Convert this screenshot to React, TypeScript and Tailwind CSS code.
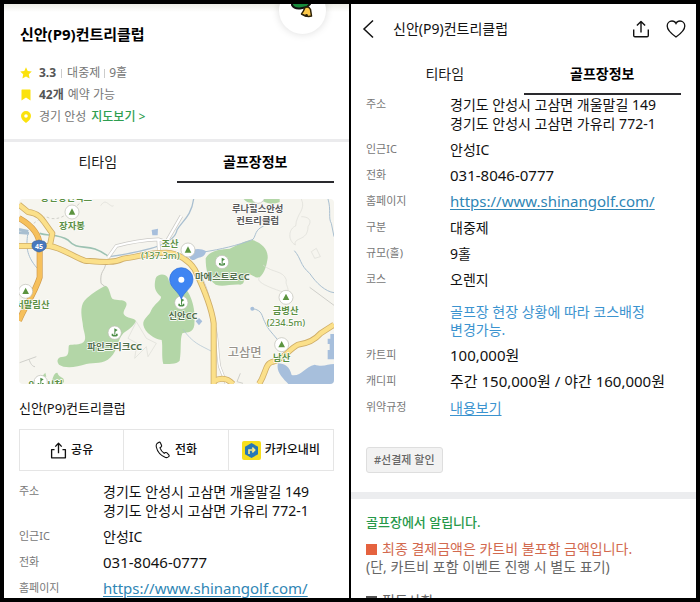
import type { ReactNode } from "react";

const HOMEPAGE = "https://www.shinangolf.com/";

function Tabs() {
  return (
    <div role="tablist" className="mx-[15px] grid grid-cols-2 text-[14px] text-[#1c1c1c]">
      <button role="tab" aria-selected="false" className="h-[41px] border-b-2 border-transparent">
        티타임
      </button>
      <button role="tab" aria-selected="true" className="h-[41px] border-b-2 border-[#2a2a2e] font-bold text-black">
        골프장정보
      </button>
    </div>
  );
}

function Row({ label, children }: { label: string; children: ReactNode }) {
  return (
    <div className="flex">
      <dt className="w-[84px] shrink-0 text-[11px] leading-[17px] text-[#777]">{label}</dt>
      <dd className="min-w-0 flex-1 whitespace-nowrap text-[14px] leading-[19px] text-[#111]">{children}</dd>
    </div>
  );
}

function BasicRows() {
  return (
    <>
      <Row label="주소">
        경기도 안성시 고삼면 개울말길 149
        <br />
        경기도 안성시 고삼면 가유리 772-1
      </Row>
      <Row label="인근IC">안성IC</Row>
      <Row label="전화">
        <span className="text-[15px]">031-8046-0777</span>
      </Row>
      <Row label="홈페이지">
        <a href={HOMEPAGE} className="text-[15px] text-[#2f86b5] underline underline-offset-2">
          {HOMEPAGE}
        </a>
      </Row>
    </>
  );
}

function Peak({ x, y }: { x: number; y: number }) {
  return (
    <g>
      <circle cx={x} cy={y} r="21" fill="#fff" stroke="#bdbdb4" strokeWidth="2" />
      <path d={`M${x} ${y - 11}l10 19h-20z`} fill="#5c9440" />
    </g>
  );
}

function Course({ x, y }: { x: number; y: number }) {
  return (
    <g>
      <circle cx={x} cy={y} r="20" fill="#fff" stroke="#bdbdb4" strokeWidth="2" />
      <path d={`M${x - 1} ${y - 13}l10 5l-7 5v9h-3z`} fill="#4f8f4a" />
      <path d={`M${x - 9} ${y + 3}h5v4h8v-4h5v6q-9 5 -18 0z`} fill="#4f8f4a" />
    </g>
  );
}

function CourseMap() {
  return (
    <svg
      viewBox="58 27 945 555"
      preserveAspectRatio="xMidYMid slice"
      className="mx-[15px] mt-4 h-[185px] rounded-sm"
      role="img"
      aria-label="신안CC 지도"
    >
      <rect x="58" y="27" width="945" height="555" fill="#f6f5ef" />
      <g fill="#b3d6a7">
        <path d="M316 287C330 288 331 318 338 326C352 333 372 326 380 338C384 350 370 358 372 372C382 388 402 382 409 393C402 410 384 420 371 430C352 452 355 480 333 502C310 525 285 517 260 522C230 532 195 536 178 524C168 510 176 500 192 500C212 500 204 475 208 466C220 462 240 466 251 457C264 445 250 425 249 400C244 370 240 342 262 324C280 308 300 296 316 287Z" />
        <path d="M468 265C475 250 500 250 506 266C510 285 520 290 545 286C570 300 590 350 584 405C580 430 565 425 548 430C540 450 546 480 540 512C530 525 505 520 491 522C485 500 490 470 486 450C465 448 435 428 431 405C428 385 450 378 455 360C465 340 486 330 484 320C465 305 462 290 468 265Z" />
        <path d="M618 205C630 180 665 178 690 176C715 165 735 152 758 150C785 158 806 178 804 205C801 225 795 250 780 262C762 265 758 250 745 256C725 270 740 280 722 284C690 282 670 292 648 284C625 270 618 240 618 205Z" />
        <path d="M732 27H840V36C818 45 800 40 790 34C770 36 745 46 732 27Z" />
        <path d="M126 560L137 548L140 560ZM152 582C160 570 160 548 173 548C180 566 194 558 193 575L188 582Z" />
      </g>
      <g fill="#a7bfdc">
        <path d="M835 520C855 520 870 530 876 555C905 560 915 530 945 524C970 532 985 522 1003 522V582H866C850 565 828 545 835 520Z" />
        <path d="M992 432H1003V508H984V480H990V462H984V446H992Z" />
        <path d="M568 192C580 174 600 174 620 184C612 206 600 200 590 206C578 216 566 206 568 192Z" />
        <path d="M456 120L475 116L474 136L458 136ZM588 394L598 384L608 394L598 406Z" />
        <circle cx="758" cy="356" r="6" />
      </g>
      <g fill="none" stroke="#a9bfd0" strokeWidth="4">
        <path d="M58 118L86 124M58 128L88 130" strokeWidth="8" />
        <path d="M84 134C80 165 78 195 112 234" strokeWidth="3" />
        <path d="M582 27C575 80 545 95 532 120C525 160 460 180 330 200" />
        <path d="M618 185C660 178 710 168 760 148C770 135 765 120 792 108" strokeWidth="3" />
        <path d="M758 356C790 360 786 380 795 395C805 420 820 430 842 460" strokeWidth="3" />
        <path d="M884 182C905 205 900 225 930 250C950 280 978 305 1003 308" strokeWidth="3" />
        <path d="M550 418C580 460 600 465 640 486" strokeWidth="2" />
        <path d="M985 27C995 60 985 85 995 100L1003 140" strokeWidth="3" />
      </g>
      <path d="M120 130C145 140 175 130 205 150C240 190 265 150 330 202" fill="none" stroke="#9cc2b2" strokeWidth="5" />
      <g fill="none" stroke="#dddcd6" strokeWidth="2">
        <path d="M90 110C120 85 135 75 150 85C185 90 200 75 240 40" strokeDasharray="8 7" stroke="#bdbcb5" />
        <path d="M303 47C320 20 330 55 342 47M905 27C920 60 890 70 888 108C868 115 862 150 887 165C880 140 925 155 925 110C940 90 925 80 905 80M935 185L950 175L962 200L945 205Z" />
        <path d="M790 225C820 250 850 240 860 270C855 290 880 300 850 315M780 262C760 280 850 305 860 310M410 395L440 445L470 460L445 500L440 470L405 505L412 460L385 445Z" />
        <path d="M60 518L110 500M88 508C92 520 98 530 106 530M722 550L712 575L730 580M930 292L1003 346" stroke="#cfcfca" strokeWidth="3" />
        <path d="M318 220C316 245 300 240 304 280L316 290" stroke="#c9c8c2" strokeWidth="3" />
      </g>
      <g fill="none" strokeLinejoin="round">
        <path d="M325 203L350 168C385 158 430 150 476 148L500 156L545 78M476 148L478 185" stroke="#cbcac6" strokeWidth="11" />
        <path d="M325 203L350 168C385 158 430 150 476 148L500 156L545 78M476 148L478 185" stroke="#fff" strokeWidth="7" />
        <path d="M590 240C625 290 632 350 640 400C655 420 652 490 660 530L680 582" stroke="#cbcac6" strokeWidth="9" />
        <path d="M590 240C625 290 632 350 640 400C655 420 652 490 660 530L680 582" stroke="#fff" strokeWidth="5" />
        <path d="M58 84C95 105 120 130 120 168V262C105 310 75 350 58 392" stroke="#cf9a4c" strokeWidth="18" />
        <path d="M58 84C95 105 120 130 120 168V262C105 310 75 350 58 392" stroke="#f6c05c" strokeWidth="14" />
        <g stroke="#cfae69" strokeWidth="18">
          <path d="M58 44L85 66C125 70 130 95 158 130L150 170M58 168H150C190 175 220 200 255 212C310 216 340 220 370 206C420 200 440 188 500 188C540 190 570 215 585 238C610 290 635 345 642 400V582" />
          <path d="M640 575C665 560 685 566 700 582M778 582C800 550 795 520 820 515C850 510 865 480 895 464C930 460 950 445 963 430L1003 404" />
        </g>
        <g stroke="#fbe08a" strokeWidth="13">
          <path d="M58 44L85 66C125 70 130 95 158 130L150 170M58 168H150C190 175 220 200 255 212C310 216 340 220 370 206C420 200 440 188 500 188C540 190 570 215 585 238C610 290 635 345 642 400V582" />
          <path d="M640 575C665 560 685 566 700 582M778 582C800 550 795 520 820 515C850 510 865 480 895 464C930 460 950 445 963 430L1003 404" />
        </g>
      </g>
      <path d="M97 168C97 150 108 155 118 150C128 155 140 150 140 168C140 178 128 184 118 186C108 184 97 178 97 168Z" fill="#4778bd" stroke="#3c65a2" strokeWidth="2" />
      <text x="118" y="176" textAnchor="middle" fontSize="21" fontWeight="700" fill="#fff">45</text>
      <Peak x={217} y={66} />
      <Peak x={78} y={304} />
      <Peak x={565} y={180} />
      <Peak x={859} y={322} />
      <Peak x={846} y={464} />
      <Course x={345} y={428} />
      <Course x={667} y={216} />
      <Course x={545} y={338} />
      <circle cx="775" cy="20" r="20" fill="#fff" stroke="#bdbdb4" strokeWidth="2" />
      <g textAnchor="middle" fontSize="28" fontWeight="700" stroke="#fff" strokeWidth="4" strokeLinejoin="round" paintOrder="stroke" fill="#5c9044">
        <text x="200" y="34">공안성컨벽스</text>
        <text x="217" y="117">장자봉</text>
        <text x="98" y="354">서말림산</text>
        <text x="511" y="170">조산</text>
        <text x="482" y="206" fontWeight="500">(137.3m)</text>
        <text x="858" y="371">금병산</text>
        <text x="859" y="408" fontWeight="500">(234.5m)</text>
        <text x="846" y="514">남산</text>
        <text x="138" y="594">안성시청</text>
        <g fill="#52704c">
          <text x="345" y="479">파인크리크CC</text>
          <text x="668" y="269">마에스트로CC</text>
          <text x="550" y="387">신안CC</text>
        </g>
        <g fill="#5a5a5a">
          <text x="774" y="67">루나힐스안성</text>
          <text x="774" y="103">컨트리클럽</text>
        </g>
        <text x="735" y="500" fontSize="37" fontWeight="500" fill="#98948c">고삼면</text>
      </g>
      <Course x={123} y={576} />
      <path d="M545 328C538 304 510 294 510 268A35 35 0 0 1 580 268C580 294 552 304 545 328Z" fill="#3f85f2" stroke="#2f6fd8" strokeWidth="2" />
      <circle cx="545" cy="269" r="9" fill="#fff" />
    </svg>
  );
}

function Mascot() {
  return (
    <div className="absolute -top-[17px] right-[23px] size-[47px] rounded-full bg-white shadow-[0_0_8px_rgba(0,0,0,0.14)]">
      <svg viewBox="0 0 47 47" className="size-full" aria-hidden="true">
        <path d="M13 12V18Q15 22 21 21.500L28 20L31 17V12Z" fill="#178a3b" stroke="#111" strokeWidth="2" />
        <path d="M26 20.500Q30 19 31.500 22.500L32.500 29Q28 30.500 22.500 27Q24.500 24.500 26 20.500Z" fill="#fcc84a" stroke="#2c2108" strokeWidth="1.500" strokeLinejoin="round" />
        <circle cx="27.500" cy="28.500" r="1.400" fill="#2c2108" />
      </svg>
    </div>
  );
}

function SummaryPanel() {
  return (
    <section className="relative min-w-0 overflow-hidden bg-white">
      <div className="absolute inset-x-0 top-0 h-2 bg-gradient-to-b from-[#ecece6] to-white" />
      <Mascot />
      <div className="relative px-4">
        <h1 className="pt-[19px] text-[15px] font-bold leading-[22px] text-black">신안(P9)컨트리클럽</h1>
        <ul className="mt-[17px] text-[12px] leading-[22px] text-[#777]">
          <li className="flex items-center">
            <svg viewBox="0 0 12 12" className="mr-[7px] size-3 fill-[#fbe20d]" aria-hidden="true">
              <path d="M6 .3L7.7 4L11.8 4.5L8.8 7.3L9.6 11.5L6 9.4L2.4 11.5L3.2 7.3L.2 4.5L4.3 4Z" />
            </svg>
            <b className="font-bold text-[#555]">3.3</b>
            <span className="mx-[5px] h-[9px] w-px bg-[#ccc]" />
            대중제
            <span className="mx-1 h-[9px] w-px bg-[#ccc]" />
            9홀
          </li>
          <li className="flex items-center">
            <svg viewBox="0 0 12 12" className="mr-[7px] size-3 fill-[#fbe20d]" aria-hidden="true">
              <path d="M2 .5H10Q10.500 .5 10.500 1V11.500L6 8.500L1.500 11.500V1Q1.500 .5 2 .5Z" />
            </svg>
            <b className="mr-1 font-bold text-[#555]">42개</b>
            예약 가능
          </li>
          <li className="flex items-center">
            <svg viewBox="0 0 12 12" className="mr-[7px] size-3 fill-[#fbe20d]" aria-hidden="true">
              <path fillRule="evenodd" d="M6 0A5 5 0 0 1 11 5C11 8 8.500 10 6 12C3.500 10 1 8 1 5A5 5 0 0 1 6 0ZM6 3.200A1.800 1.800 0 1 0 6 6.800A1.800 1.800 0 1 0 6 3.200Z" />
            </svg>
            경기 안성
            <a href="#map" className="ml-[5px] font-medium text-[#2f9e50]">
              지도보기 &gt;
            </a>
          </li>
        </ul>
      </div>
      <div className="mt-[11px] h-[3px] bg-[#ebebed]" />
      <Tabs />
      <div id="map" className="flex flex-col">
        <CourseMap />
      </div>
      <h2 className="mx-[15px] mt-[14px] text-[13px] leading-5 text-[#111]">신안(P9)컨트리클럽</h2>
      <div className="mx-[15px] mt-[11px] grid grid-cols-3 divide-x divide-[#e5e5e5] border border-[#e5e5e5] text-[12px] font-medium text-[#111]">
        <button className="flex h-10 items-center justify-center gap-1">
          <svg viewBox="0 0 18 18" className="size-[17px]" fill="none" stroke="currentColor" strokeWidth="1.400" strokeLinejoin="round" aria-hidden="true">
            <path d="M4.800 8H1.700V16.800H16.300V8H13.200M9 12V1.500M5.600 4.900L9 1.400L12.400 4.900" />
          </svg>
          공유
        </button>
        <button className="flex h-10 items-center justify-center gap-1">
          <svg viewBox="0 0 16 18" className="h-[18px] w-4" fill="none" stroke="currentColor" strokeWidth="1.100" aria-hidden="true">
            <path d="M2 2.500L4 1.200Q5 .8 5.500 2L6.600 4.500Q6.900 5.500 6 6L5 6.800Q6 10 9.200 12.300L10.500 11.600Q11.400 11.200 12 12L14 14Q14.600 14.800 13.800 15.500Q12.500 17 10.500 16.500Q3 13.500 1.300 6Q.8 3.800 2 2.500Z" />
          </svg>
          전화
        </button>
        <button className="flex h-10 items-center justify-center gap-1">
          <svg viewBox="0 0 19 19" className="size-[19px]" aria-hidden="true">
            <rect width="19" height="19" rx="2" fill="#f7df1d" />
            <path d="M9.500 2L16 5.700V13.300L9.500 17L3 13.300V5.700Z" fill="#2878b5" />
            <path d="M7 13V9H12M10.300 6.700L12.600 9L10.300 11.300" fill="none" stroke="#f7e98a" strokeWidth="1.700" />
          </svg>
          카카오내비
        </button>
      </div>
      <dl className="mx-[15px] mt-[11px] space-y-[7px]">
        <BasicRows />
      </dl>
    </section>
  );
}

function DetailPanel() {
  return (
    <section className="min-w-0 overflow-hidden bg-white">
      <header className="flex h-[50px] items-center px-[10px] text-[#111]">
        <button aria-label="뒤로">
          <svg viewBox="0 0 14 20" className="h-5 w-[14px]" fill="none" stroke="currentColor" strokeWidth="1.500" aria-hidden="true">
            <path d="M12 1.500L3 10L12 18.500" />
          </svg>
        </button>
        <h1 className="ml-[18px] flex-1 text-[14px] leading-5">신안(P9)컨트리클럽</h1>
        <button aria-label="공유">
          <svg viewBox="0 0 18 18" className="size-[18px]" fill="none" stroke="currentColor" strokeWidth="1.400" strokeLinejoin="round" aria-hidden="true">
            <path d="M1.700 9.500V15.500Q1.700 16.800 3 16.800H15Q16.300 16.800 16.300 15.500V9.500M9 12.500V1.500M4.900 5.600L9 1.400L13.100 5.600" />
          </svg>
        </button>
        <button aria-label="찜" className="ml-4">
          <svg viewBox="0 0 20 18" className="h-[18px] w-5" fill="none" stroke="currentColor" strokeWidth="1.300" aria-hidden="true">
            <path d="M10 17C5 13.500 1.200 10 1.200 6C1.200 3 3.400 1 6 1C7.800 1 9.300 2 10 3.500C10.700 2 12.200 1 14 1C16.600 1 18.800 3 18.800 6C18.800 10 15 13.500 10 17Z" />
          </svg>
        </button>
      </header>
      <Tabs />
      <dl className="mx-[15px] space-y-[7px]">
        <BasicRows />
        <Row label="구분">대중제</Row>
        <Row label="규모(홀)">9홀</Row>
        <Row label="코스">
          오렌지
          <p className="mt-[14px] leading-[18px] text-[#3b93cf]">
            골프장 현장 상황에 따라 코스배정
            <br />
            변경가능.
          </p>
        </Row>
        <Row label="카트피">
          <span className="text-[15px]">100,000원</span>
        </Row>
        <Row label="캐디피">
          <span className="text-[15px]">주간 150,000원 / 야간 160,000원</span>
        </Row>
        <Row label="위약규정">
          <a href="#policy" className="text-[#3b93cf] underline underline-offset-2">
            내용보기
          </a>
        </Row>
      </dl>
      <button className="mx-[15px] mt-[30px] block h-[26px] rounded-[3px] border border-[#dedede] bg-[#f2f2f2] px-[7px] text-[11px] font-medium text-[#666]">
        #선결제 할인
      </button>
      <div className="mt-[19px] h-[7px] bg-[#ecedef]" />
      <div className="mx-[15px] mt-[13px] whitespace-nowrap text-[14px] leading-[18px] text-[#666]">
        <h2 className="text-[13px] font-medium leading-5 text-[#27994a]">골프장에서 알립니다.</h2>
        <p className="mt-2 flex items-center text-[#d2694e]">
          <span className="mr-[5px] size-[11px] bg-[#e5623f]" />
          최종 결제금액은 카트비 불포함 금액입니다.
        </p>
        <p>(단, 카트비 포함 이벤트 진행 시 별도 표기)</p>
        <p id="policy" className="mt-4 flex items-center">
          <span className="mr-[5px] size-[11px] bg-[#555]" />
          필독사항
        </p>
      </div>
    </section>
  );
}

export default function App() {
  return (
    <main
      lang="ko"
      className="grid h-screen grid-cols-2 grid-rows-1 gap-[2px] overflow-hidden bg-black p-1 font-['Noto_Sans','Noto_Sans_CJK_KR',sans-serif]"
    >
      <SummaryPanel />
      <DetailPanel />
    </main>
  );
}
